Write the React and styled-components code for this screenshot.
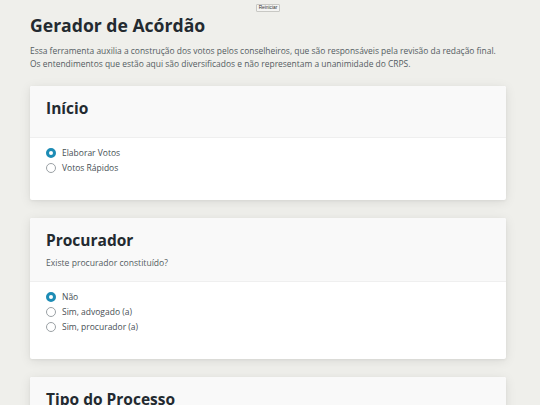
import React, { useState } from "react";
import styled, { createGlobalStyle } from "styled-components";

const Global = createGlobalStyle`
  html, body { margin: 0; padding: 0; background: #efefeb; }
  body { font-family: "Open Sans", "Noto Sans", sans-serif; color: #2b3238; }
  * { box-sizing: border-box; }
`;

const Page = styled.div`
  padding: 0 34px 0 30px;
  display: flex;
  flex-direction: column;
`;

const TopBar = styled.div`
  display: flex;
  justify-content: center;
  padding-top: 4px;
  height: 13px;
`;

const TinyButton = styled.button`
  font-family: "Liberation Sans", Arial, sans-serif;
  font-size: 4.8px;
  line-height: 6px;
  padding: 0 2px;
  height: 8px;
  background: #f4f4f2;
  border: 0.5px solid #c8c8c4;
  border-radius: 1px;
  color: #333;
`;

const Title = styled.h1`
  margin: 0;
  font-size: 17.6px;
  font-weight: 700;
  line-height: 24px;
  color: #232a30;
`;

const Intro = styled.p`
  margin: 7px 0 0;
  font-size: 8.45px;
  line-height: 13px;
  color: #545c62;
`;

const Cards = styled.div`
  display: flex;
  flex-direction: column;
  gap: 18px;
  margin-top: 16px;
`;

const Card = styled.section`
  background: #fff;
  border-radius: 2px;
  box-shadow: 0 2px 12px rgba(0, 0, 0, 0.09), 0 1px 3px rgba(0, 0, 0, 0.05);
  overflow: hidden;
`;

const CardHeader = styled.div`
  background: #f9f9f9;
  border-bottom: 1px solid #efefef;
  padding: 12px 16px 0;
  height: ${(p) => (p.$sub ? "64px" : "52px")};
`;

const CardTitle = styled.h2`
  margin: 0;
  font-size: 15.5px;
  font-weight: 700;
  line-height: 20px;
  color: #232a30;
`;

const Sub = styled.div`
  margin-top: 8px;
  font-size: 8.6px;
  line-height: 11px;
  color: #555d63;
`;

const CardBody = styled.div`
  padding: 7px 16px 0;
  height: ${(p) => p.$h}px;
  display: flex;
  flex-direction: column;
`;

const Option = styled.label`
  display: flex;
  align-items: center;
  gap: 6px;
  height: 15px;
  font-size: 8.5px;
  color: #474f55;
  cursor: pointer;
`;

const Radio = styled.span`
  width: 10px;
  height: 10px;
  border-radius: 50%;
  flex-shrink: 0;
  background: #fff;
  border: ${(p) => (p.$on ? "3px solid #1d8cb5" : "1px solid #9ba1a5")};
`;

function Group({ options, value, onChange }) {
  return options.map((o, i) => (
    <Option key={o} onClick={() => onChange(i)}>
      <Radio $on={value === i} />
      {o}
    </Option>
  ));
}

export default function App() {
  const [a, setA] = useState(0);
  const [b, setB] = useState(0);
  return (
    <>
      <Global />
      <Page>
        <TopBar>
          <TinyButton>Reiniciar</TinyButton>
        </TopBar>
        <Title>Gerador de Acórdão</Title>
        <Intro>
          Essa ferramenta auxilia a construção dos votos pelos conselheiros, que são responsáveis pela revisão da redação final.
          <br />
          Os entendimentos que estão aqui são diversificados e não representam a unanimidade do CRPS.
        </Intro>
        <Cards>
          <Card>
            <CardHeader>
              <CardTitle>Início</CardTitle>
            </CardHeader>
            <CardBody $h={62}>
              <Group options={["Elaborar Votos", "Votos Rápidos"]} value={a} onChange={setA} />
            </CardBody>
          </Card>
          <Card>
            <CardHeader $sub>
              <CardTitle>Procurador</CardTitle>
              <Sub>Existe procurador constituído?</Sub>
            </CardHeader>
            <CardBody $h={77}>
              <Group
                options={["Não", "Sim, advogado (a)", "Sim, procurador (a)"]}
                value={b}
                onChange={setB}
              />
            </CardBody>
          </Card>
          <Card>
            <CardHeader>
              <CardTitle>Tipo do Processo</CardTitle>
            </CardHeader>
            <CardBody $h={60} />
          </Card>
        </Cards>
      </Page>
    </>
  );
}
